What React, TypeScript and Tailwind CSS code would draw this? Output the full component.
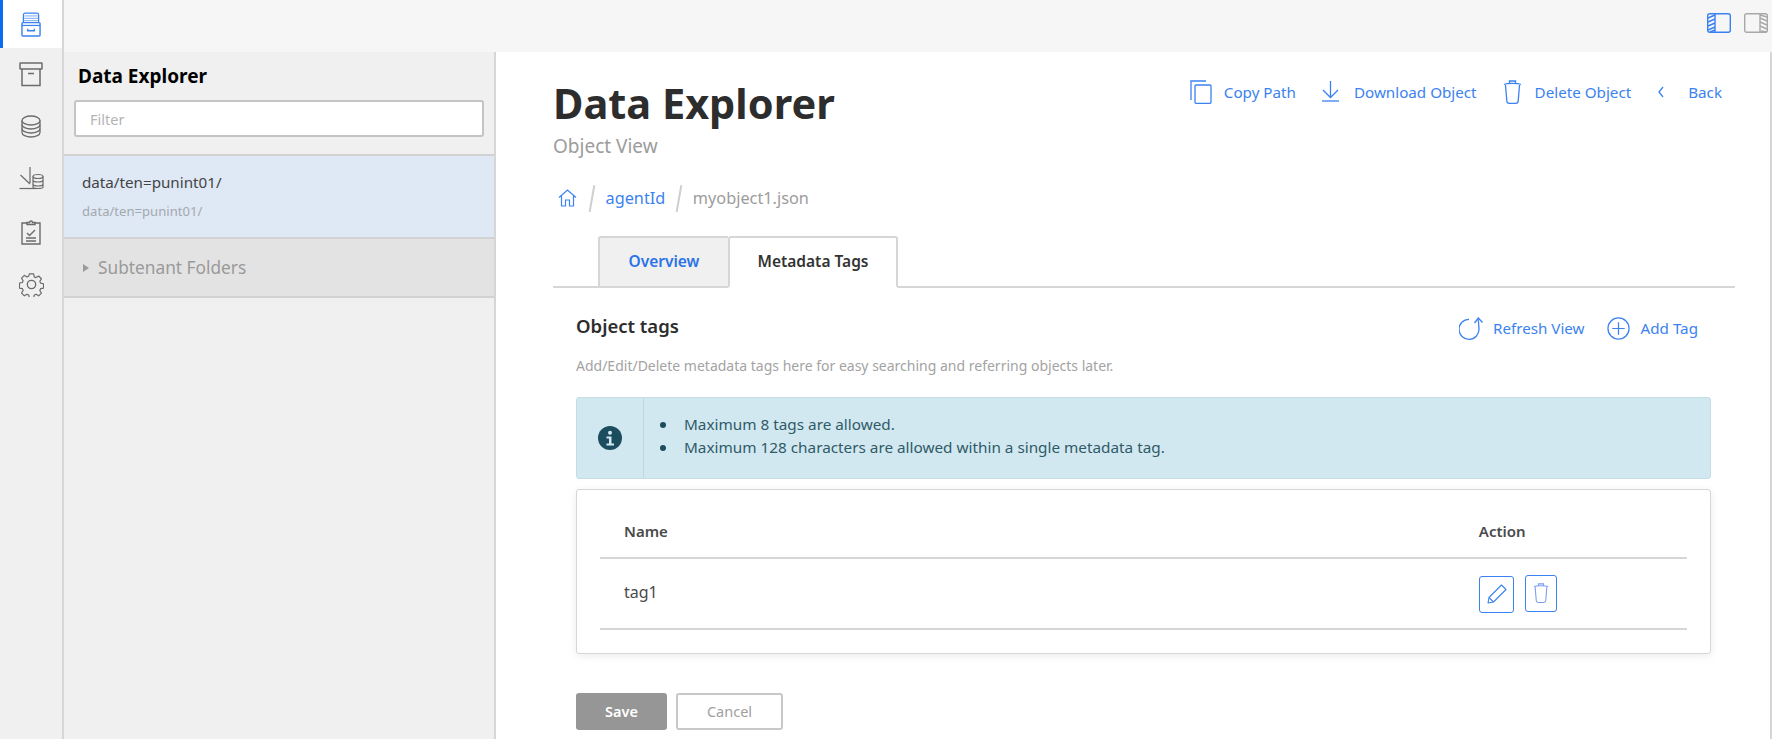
import type { ReactNode } from "react";

const BLUE = "#3b82f0";
const GRAY = "#6b6b6b";

function CabinetIcon() {
  return (
    <svg width="20" height="25" viewBox="0 0 21 26" fill="none" stroke={BLUE} strokeWidth="1.3">
      <path d="M2.5 11V3a2 2 0 0 1 2-2h12a2 2 0 0 1 2 2v8" />
      <path d="M3.5 4h14M3 6.5h15M2.8 9h15.4" strokeWidth="1" opacity="0.7" />
      <rect x="1" y="11" width="19" height="14" rx="1" strokeWidth="1.5" />
      <path d="M1 14h19" />
      <path d="M7 17.5v2h7v-2" strokeWidth="1.5" />
    </svg>
  );
}

function BoxIcon() {
  return (
    <svg width="24" height="25" viewBox="0 0 24 25" fill="none" stroke={GRAY} strokeWidth="1.5">
      <rect x="1" y="1" width="22" height="6" rx="0.5" />
      <path d="M3 7v16.5h18V7" />
      <path d="M9 11.5h6" />
    </svg>
  );
}

function DbIcon() {
  return (
    <svg width="20" height="24" viewBox="0 0 20 24" fill="none" stroke={GRAY} strokeWidth="1.3">
      <ellipse cx="10" cy="5.5" rx="9" ry="4.5" />
      <path d="M1 5.500v4c0 2.500 4 4.500 9 4.500s9-2 9-4.500v-4" />
      <path d="M1 9.500v4c0 2.500 4 4.500 9 4.500s9-2 9-4.500v-4" />
      <path d="M1 13.500v4c0 2.500 4 4.500 9 4.500s9-2 9-4.500v-4" />
    </svg>
  );
}

function ImportIcon() {
  return (
    <svg width="25" height="23" viewBox="0 0 25 23" fill="none" stroke={GRAY} strokeWidth="1.2">
      <path d="M11 0v16M1.500 8l9.500 9" />
      <path d="M0.500 21.500h17" />
      <ellipse cx="19" cy="9.500" rx="5" ry="2" />
      <path d="M14 9.500v10.500c0 1 2 1.500 5 1.500s5-.5 5-1.500V9.500M14 13c0 1 2 2 5 2s5-1 5-2M14 17c0 1 2 2 5 2s5-1 5-2" />
    </svg>
  );
}

function ClipboardIcon() {
  return (
    <svg width="20" height="25" viewBox="0 0 20 25" fill="none" stroke={GRAY} strokeWidth="1.4">
      <path d="M6 3H1v21h18V3h-5" />
      <path d="M6 4.500V2.500h2.500a1.500 1.500 0 0 1 3 0H14v2z" />
      <path d="M6 13l2.500 2.500L14 10" />
      <path d="M5 18h10M5 21h10" />
    </svg>
  );
}

function GearIcon() {
  return (
    <svg width="25" height="25" viewBox="0 0 24 24" fill="none" stroke={GRAY} strokeWidth="1.3" strokeLinejoin="round">
      <circle cx="12" cy="12" r="4" />
      <path d="M9.700 1h4.600l.7 3.200 1.900.8 2.800-1.700 3 3-1.700 2.800.8 1.900 3.200.7v4.600l-3.200.7-.8 1.900 1.700 2.800-3 3-2.800-1.700-1.900.8-.7 3.200H9.700L9 23.800l-1.900-.8-2.800 1.700-3-3 1.700-2.800-.8-1.900-3.200-.7V11l3.200-.7.800-1.900L1.300 5.600l3-3 2.800 1.700L9 3.500z" transform="translate(1.300 .9) scale(0.89)" />
    </svg>
  );
}

function PanelLeftIcon() {
  return (
    <svg width="24" height="20" viewBox="0 0 24 20" fill="none" stroke={BLUE} strokeWidth="1.400">
      <rect x="0.700" y="0.700" width="22.600" height="18.600" rx="2" />
      <path d="M8 1v18" />
      <path d="M1 5l7-3M1 9l7-3M1 13l7-3M1 17l7-3M3 19l5-2" strokeWidth="1.500" />
    </svg>
  );
}

function PanelRightIcon() {
  return (
    <svg width="24" height="20" viewBox="0 0 24 20" fill="none" stroke="#a8a8a8" strokeWidth="1.400">
      <rect x="0.700" y="0.700" width="22.600" height="18.600" rx="2" />
      <path d="M16 1v18" />
      <path d="M16 5l7 3M16 9l7 3M16 13l7 3M16 2l7 2M17 18l6 1" strokeWidth="1.500" />
    </svg>
  );
}

function CopyIcon() {
  return (
    <svg width="22" height="24" viewBox="0 0 22 24" fill="none" stroke={BLUE} strokeWidth="1.300">
      <path d="M16 1H1v19" />
      <rect x="5" y="5" width="16" height="18.300" rx="1" />
    </svg>
  );
}

function DownloadIcon() {
  return (
    <svg width="19" height="21" viewBox="0 0 19 21" fill="none" stroke={BLUE} strokeWidth="1.300">
      <path d="M9.500 0v16M2 9l7.500 7.500L17 9" />
      <path d="M1 20h17" />
    </svg>
  );
}

function TrashIcon({ w, h, color = BLUE }: { w: number; h: number; color?: string }) {
  return (
    <svg width={w} height={h} viewBox="0 0 18 24" fill="none" stroke={color} strokeWidth="1.300">
      <path d="M0.500 4.500c3-1.500 14-1.500 17 0" />
      <path d="M6 3.200V1h6v2.200" />
      <path d="M2 5l1.300 16c.1 1.500 1 2.300 2.500 2.300h6.400c1.500 0 2.400-.8 2.500-2.300L16 5" />
    </svg>
  );
}

function RefreshIcon() {
  return (
    <svg width="25" height="23" viewBox="0 0 25 23" fill="none" stroke={BLUE} strokeWidth="1.300">
      <path d="M10 2.300A10 10 0 1 0 20 12c0-3-.3-6-1-10" />
      <path d="M15.500 6l3.800-5 4.200 4.500" />
    </svg>
  );
}

function PlusCircleIcon() {
  return (
    <svg width="23" height="23" viewBox="0 0 24 24" fill="none" stroke={BLUE} strokeWidth="1.300">
      <circle cx="12" cy="12" r="11" />
      <path d="M12 5.500v13M5.500 12h13" />
    </svg>
  );
}

function HomeIcon() {
  return (
    <svg width="19" height="18" viewBox="0 0 19 18" fill="none" stroke={BLUE} strokeWidth="1.200">
      <path d="M1 8.500L9.500 1 18 8.500M3.500 7v10h4v-6h4v6h4V7" />
    </svg>
  );
}

function PencilIcon() {
  return (
    <svg width="20" height="20" viewBox="0 0 20 20" fill="none" stroke={BLUE} strokeWidth="1.100" strokeLinejoin="round">
      <path d="M1 19l1-5.500L14.500 1 19 5.500 6.500 18z" />
      <path d="M2 13.500L6.500 18" />
    </svg>
  );
}

function InfoIcon() {
  return (
    <svg width="24" height="24" viewBox="0 0 24 24">
      <circle cx="12" cy="12" r="12" fill="#1c4d5e" />
      <circle cx="12" cy="6.800" r="2" fill="#d2e8f0" />
      <path d="M8.500 10.500h5v7h2.500v2H8.500v-2H11v-5H8.500z" fill="#d2e8f0" />
    </svg>
  );
}

function ActionLink({ icon, label, gap, className }: { icon: ReactNode; label: string; gap: string; className?: string }) {
  return (
    <a className={`flex items-center ${gap} text-[15.200px] text-[#3b82f0] ${className ?? ""}`}>
      {icon}
      <span>{label}</span>
    </a>
  );
}

export default function App() {
  return (
    <div className="flex h-[739px] w-[1772px] overflow-hidden bg-white font-['Noto_Sans',sans-serif]">
      {/* left icon rail */}
      <nav className="flex w-[64px] shrink-0 flex-col items-stretch border-r-2 border-[#d6d6d6] bg-[#f0f0f0]">
        <div className="flex h-[48px] items-center justify-center border-l-[3px] border-[#0a6cf0] bg-white pr-[4px]">
          <CabinetIcon />
        </div>
        <div className="flex flex-col items-center">
          <div className="mt-[14px]"><BoxIcon /></div>
          <div className="mt-[28px]"><DbIcon /></div>
          <div className="mt-[28px]"><ImportIcon /></div>
          <div className="mt-[30px]"><ClipboardIcon /></div>
          <div className="mt-[27px]"><GearIcon /></div>
        </div>
      </nav>

      <div className="flex min-w-0 flex-1 flex-col">
        {/* top bar */}
        <header className="flex h-[52px] shrink-0 items-start justify-end gap-[13px] bg-[#f6f6f6] pr-[4px] pt-[13px]">
          <PanelLeftIcon />
          <PanelRightIcon />
        </header>

        <div className="flex min-h-0 flex-1">
          {/* explorer panel */}
          <aside className="flex w-[432px] shrink-0 flex-col border-r-2 border-[#d6d6d6] bg-[#f0f0f0]">
            <div className="px-[10px] pt-[12px]">
              <h2 className="pl-[4px] text-[19px] leading-[25px] font-bold text-black">Data Explorer</h2>
              <input
                placeholder="Filter"
                readOnly
                className="mt-[11px] block h-[37px] w-[410px] rounded-[3px] border-2 border-[#c4c4c4] bg-white px-[14px] text-[14.500px] placeholder:text-[#b4b4b4]"
              />
            </div>
            <div className="mt-[17px] h-[85px] border-y-2 border-[#d2d2d2] bg-[#dfe8f5] pl-[18px]">
              <div className="mt-[16px] text-[15.200px] leading-[20px] text-[#444]">data/ten=punint01/</div>
              <div className="mt-[11px] text-[13.100px] leading-[16px] text-[#a3a8ad]">data/ten=punint01/</div>
            </div>
            <div className="flex h-[59px] items-center border-b-2 border-[#d2d2d2] bg-[#e3e3e3] pl-[19px] pt-[1px]">
              <span className="h-0 w-0 border-y-[4px] border-l-[6px] border-y-transparent border-l-[#9a9a9a]" />
              <span className="ml-[9px] text-[17.300px] text-[#9a9a9a]">Subtenant Folders</span>
            </div>
          </aside>

          {/* main column */}
          <main className="min-w-0 flex-1 border-r-2 border-[#d6d6d6] pl-[57px]">
            <div className="flex items-start pr-[25px]">
              <div className="pt-[27px]">
                <h1 className="text-[41.500px] leading-[48px] font-bold text-[#2d2d2d]">Data Explorer</h1>
                <p className="mt-[7px] text-[19px] leading-[24px] text-[#9c9c9c]">Object View</p>
              </div>
              <div className="ml-auto mr-[23px] mt-[28px] flex items-center">
                <ActionLink icon={<CopyIcon />} label="Copy Path" gap="gap-[12px]" />
                <ActionLink icon={<DownloadIcon />} label="Download Object" gap="gap-[14px]" className="ml-[25px]" />
                <ActionLink icon={<TrashIcon w={21} h={24} />} label="Delete Object" gap="gap-[12px]" className="ml-[25px]" />
                <ActionLink
                  icon={
                    <svg width="8" height="12" viewBox="0 0 8 12" fill="none" stroke={BLUE} strokeWidth="1.300">
                      <path d="M6 1L2 6l4 5" />
                    </svg>
                  }
                  label="Back"
                  gap="gap-[23px]"
                  className="ml-[26px]"
                />
              </div>
            </div>

            {/* breadcrumb */}
            <div className="mt-[25px] flex h-[30px] items-center pl-[5px] text-[16.300px]">
              <HomeIcon />
              <span className="ml-[14px] h-[27px] w-[1.500px] rotate-[10deg] bg-[#cfcfcf]" />
              <a className="ml-[13px] text-[#3b82f0]">agentId</a>
              <span className="ml-[13px] h-[27px] w-[1.500px] rotate-[10deg] bg-[#cfcfcf]" />
              <span className="ml-[13px] text-[#9c9c9c]">myobject1.json</span>
            </div>

            {/* tabs */}
            <div className="mt-[23px] mr-[35px] flex h-[52px] items-end border-b-2 border-[#d6d6d6] pl-[45px]">
              <div className="-mb-[2px] flex h-[52px] w-[130px] items-center justify-center rounded-tl-[3px] border-2 border-r-0 border-[#d6d6d6] bg-[#f0f0f0] text-[15.500px] font-semibold text-[#2a73e8]">
                Overview
              </div>
              <div className="-mb-[2px] flex h-[52px] w-[170px] items-center justify-center rounded-t-[3px] border-2 border-b-white border-[#d6d6d6] bg-white text-[15.500px] font-semibold text-[#333]">
                Metadata Tags
              </div>
            </div>

            {/* object tags */}
            <div className="pl-[23px] pr-[59px]">
              <div className="mt-[23px] flex items-start justify-between">
                <div>
                  <h3 className="text-[18.500px] leading-[30px] font-semibold text-[#2d2d2d]">Object tags</h3>
                  <p className="mt-[16px] text-[14px] leading-[18px] text-[#a3a3a3]">
                    Add/Edit/Delete metadata tags here for easy searching and referring objects later.
                  </p>
                </div>
                <div className="mr-[13px] mt-[6px] flex items-center">
                  <ActionLink icon={<RefreshIcon />} label="Refresh View" gap="gap-[9px]" />
                  <ActionLink icon={<PlusCircleIcon />} label="Add Tag" gap="gap-[11px]" className="ml-[22px]" />
                </div>
              </div>

              {/* notice */}
              <div className="mt-[22px] flex h-[82px] rounded-[3px] border border-[#c5dde6] bg-[#d2e8f0]">
                <div className="flex w-[67px] items-center justify-center border-r border-[#bcd8e2]">
                  <InfoIcon />
                </div>
                <ul className="flex flex-col justify-center pb-[4px] pl-[16px] text-[15.300px] leading-[23px] text-[#2f5a68]">
                  <li className="flex items-center">
                    <span className="mr-[18px] h-[6px] w-[6px] rounded-full bg-[#1c4d5e]" />
                    Maximum 8 tags are allowed.
                  </li>
                  <li className="flex items-center">
                    <span className="mr-[18px] h-[6px] w-[6px] rounded-full bg-[#1c4d5e]" />
                    Maximum 128 characters are allowed within a single metadata tag.
                  </li>
                </ul>
              </div>

              {/* table card */}
              <div className="mt-[10px] h-[165px] rounded-[3px] border-[1.500px] border-[#d6d6d6] bg-white px-[23px] shadow-[0_2px_8px_rgba(0,0,0,0.08)]">
                <div className="flex h-[69px] items-center border-b-2 border-[#d6d6d6] pt-[16px] text-[15px] font-semibold text-[#4a4a4a]">
                  <span className="ml-[24px]">Name</span>
                  <span className="ml-[811px]">Action</span>
                </div>
                <div className="flex h-[71px] items-center border-b-2 border-[#d6d6d6] text-[16px] text-[#4a4a4a]">
                  <span className="ml-[24px] pb-[4px]">tag1</span>
                  <div className="ml-auto mr-[130px] flex items-start gap-[11px]">
                    <button className="mt-[1px] flex h-[37px] w-[35px] items-center justify-center rounded-[3px] border-[1.500px] border-[#3b82f0]">
                      <PencilIcon />
                    </button>
                    <button className="flex h-[37px] w-[32px] items-center justify-center rounded-[3px] border-[1.500px] border-[#3b82f0]">
                      <TrashIcon w={16} h={20} color="#7a9cf0" />
                    </button>
                  </div>
                </div>
              </div>

              {/* footer buttons */}
              <div className="mt-[39px] flex gap-[9px]">
                <button className="h-[37px] w-[91px] rounded-[3px] bg-[#969696] text-[14.500px] font-semibold text-white">Save</button>
                <button className="h-[37px] w-[107px] rounded-[3px] border-2 border-[#c8c8c8] bg-white text-[14.500px] text-[#a0a0a0]">Cancel</button>
              </div>
            </div>
          </main>
        </div>
      </div>
    </div>
  );
}
